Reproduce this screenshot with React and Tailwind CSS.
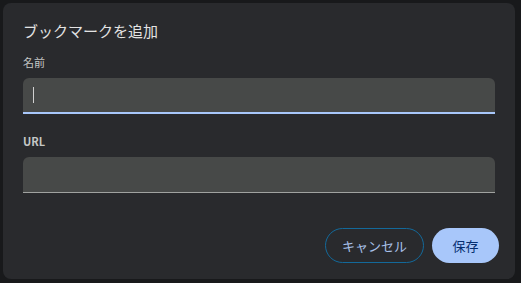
export default function App() {
  return (
    <div
      className="w-[521px] h-[283px] bg-[#18191b] pt-[3px] pl-[3px] pr-[6px] pb-[4px]"
      style={{ fontFamily: '"Noto Sans CJK JP", "Noto Sans", sans-serif' }}
    >
      <div className="h-full rounded-lg bg-[#292a2d] px-5 pt-[18px] pb-4 flex flex-col">
        <h2 className="text-[15px] leading-[20px] text-[#e3e3e3]">ブックマークを追加</h2>

        {/* 名前 */}
        <label className="mt-[13px] text-[11px] leading-[16px] text-[#c4c7c5]">名前</label>
        <div className="mt-[8px] h-[36px] rounded-t-[6px] bg-[#474948] border-b-2 border-[#a8c7fa] flex items-center px-[10px]">
          <span className="w-px h-[16px] bg-[#d0d0d0]" />
        </div>

        {/* URL */}
        <label className="mt-[19px] text-[11px] leading-[16px] font-bold text-[#c4c7c5]">URL</label>
        <div className="mt-[8px] h-[36px] rounded-t-[6px] bg-[#474948] border-b border-[#a0a2a0]" />

        <div className="mt-auto flex justify-end gap-2">
          <button className="w-[99px] h-[35px] rounded-full border border-[#13699a] text-[13px] text-[#a8c0e8]">
            キャンセル
          </button>
          <button className="w-[67px] h-[35px] rounded-full bg-[#a8c7fa] text-[13px] text-[#062e6f] -mr-1">
            保存
          </button>
        </div>
      </div>
    </div>
  );
}
